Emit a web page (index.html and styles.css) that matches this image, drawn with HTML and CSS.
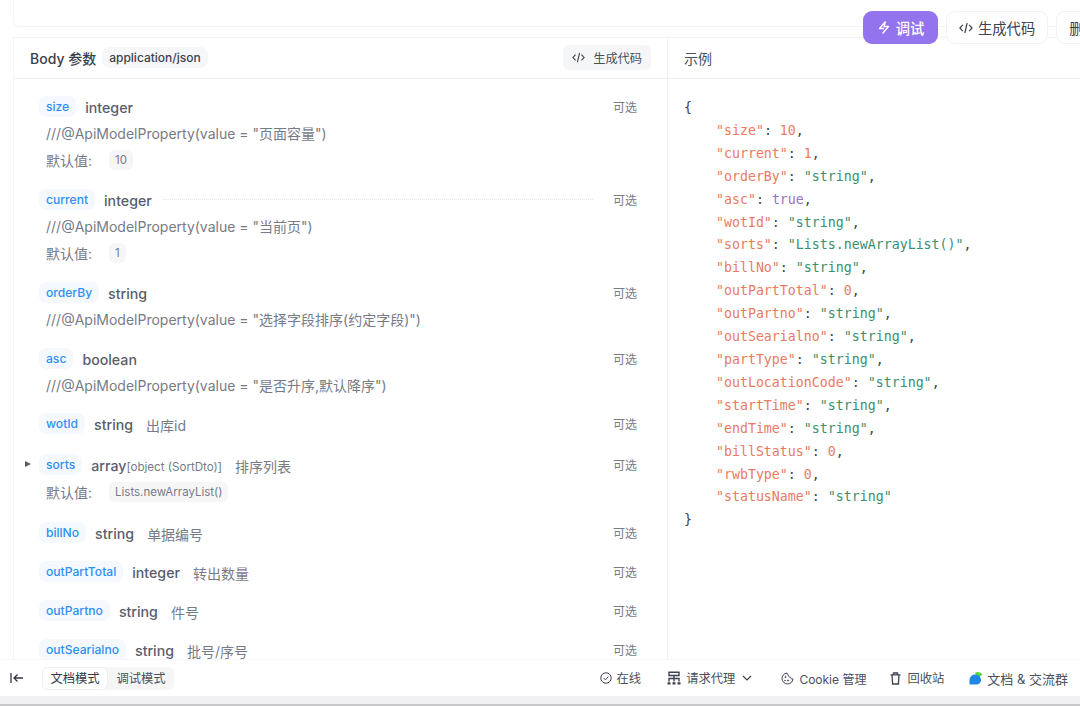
FILE: index.html
```html
<!DOCTYPE html>
<html lang="en">
<head>
    <meta charset="UTF-8">
    <meta name="viewport" content="width=device-width, initial-scale=1.0">
    <title>Body 参数</title>
    <link rel="stylesheet" href="styles.css">
</head>
<body>
    <div class="top-card"></div>

    <div class="top-actions">
        <button class="btn btn-run">
            <svg width="14" height="15" viewBox="0 0 14 15" fill="none" stroke="#fff" stroke-width="1.3" stroke-linejoin="round"><path d="M8.500 1.500 2.500 8.500h4.500M5.500 13.500l6-7H7L8.500 1.500"/></svg>
            调试
        </button>
        <button class="btn">
            <svg width="14" height="12" viewBox="0 0 14 12" fill="none" stroke="#3d4250" stroke-width="1.2"><path d="M3.800 2.800.9 6l2.900 3.200M10.200 2.800 13.100 6l-2.900 3.200M8.200 1 5.800 11"/></svg>
            生成代码
        </button>
        <button class="btn">删除</button>
    </div>

    <main class="panel">
        <section class="col-left">
            <header class="col-head">
                <div class="head-left">
                    <span class="head-title">Body 参数</span>
                    <span class="content-type">application/json</span>
                </div>
                <button class="gen-code">
                    <svg width="13" height="11" viewBox="0 0 14 12" fill="none" stroke="#3d4250" stroke-width="1.2"><path d="M3.800 2.800.9 6l2.900 3.200M10.200 2.800 13.100 6l-2.900 3.200M8.200 1 5.800 11"/></svg>
                    生成代码
                </button>
            </header>

            <div class="params">
                <div class="param">
                    <div class="param-line">
                        <span class="name">size</span><span class="type">integer</span>
                        <span class="optional">可选</span>
                    </div>
                    <div class="desc">///@ApiModelProperty(value = "页面容量")</div>
                    <div class="desc">默认值: <span class="default-val">10</span></div>
                </div>
                <div class="param">
                    <div class="param-line">
                        <span class="name">current</span><span class="type">integer</span>
                        <span class="dots"></span>
                        <span class="optional">可选</span>
                    </div>
                    <div class="desc">///@ApiModelProperty(value = "当前页")</div>
                    <div class="desc">默认值: <span class="default-val">1</span></div>
                </div>
                <div class="param">
                    <div class="param-line">
                        <span class="name">orderBy</span><span class="type">string</span>
                        <span class="optional">可选</span>
                    </div>
                    <div class="desc">///@ApiModelProperty(value = "选择字段排序(约定字段)")</div>
                </div>
                <div class="param param-asc">
                    <div class="param-line">
                        <span class="name">asc</span><span class="type">boolean</span>
                        <span class="optional">可选</span>
                    </div>
                    <div class="desc">///@ApiModelProperty(value = "是否升序,默认降序")</div>
                </div>
                <div class="param param-wotid">
                    <div class="param-line">
                        <span class="name">wotId</span><span class="type">string</span><span class="note">出库id</span>
                        <span class="optional">可选</span>
                    </div>
                </div>
                <div class="param param-sorts">
                    <div class="param-line">
                        <span class="caret"></span>
                        <span class="name">sorts</span><span class="type">array<em>[object (SortDto)]</em></span><span class="note">排序列表</span>
                        <span class="optional">可选</span>
                    </div>
                    <div class="desc">默认值: <span class="default-val">Lists.newArrayList()</span></div>
                </div>
                <div class="param">
                    <div class="param-line">
                        <span class="name">billNo</span><span class="type">string</span><span class="note">单据编号</span>
                        <span class="optional">可选</span>
                    </div>
                </div>
                <div class="param">
                    <div class="param-line">
                        <span class="name">outPartTotal</span><span class="type">integer</span><span class="note">转出数量</span>
                        <span class="optional">可选</span>
                    </div>
                </div>
                <div class="param">
                    <div class="param-line">
                        <span class="name">outPartno</span><span class="type">string</span><span class="note">件号</span>
                        <span class="optional">可选</span>
                    </div>
                </div>
                <div class="param">
                    <div class="param-line">
                        <span class="name">outSearialno</span><span class="type">string</span><span class="note">批号/序号</span>
                        <span class="optional">可选</span>
                    </div>
                </div>
            </div>
        </section>

        <section class="col-right">
            <header class="col-head col-head-right">示例</header>
<pre class="code">{
    <b>"size"</b>: <i>10</i>,
    <b>"current"</b>: <i>1</i>,
    <b>"orderBy"</b>: <u>"string"</u>,
    <b>"asc"</b>: <s>true</s>,
    <b>"wotId"</b>: <u>"string"</u>,
    <b>"sorts"</b>: <u>"Lists.newArrayList()"</u>,
    <b>"billNo"</b>: <u>"string"</u>,
    <b>"outPartTotal"</b>: <i>0</i>,
    <b>"outPartno"</b>: <u>"string"</u>,
    <b>"outSearialno"</b>: <u>"string"</u>,
    <b>"partType"</b>: <u>"string"</u>,
    <b>"outLocationCode"</b>: <u>"string"</u>,
    <b>"startTime"</b>: <u>"string"</u>,
    <b>"endTime"</b>: <u>"string"</u>,
    <b>"billStatus"</b>: <i>0</i>,
    <b>"rwbType"</b>: <i>0</i>,
    <b>"statusName"</b>: <u>"string"</u>
}</pre>
        </section>
    </main>

    <footer class="bottom-bar">
        <div class="bottom-left">
            <svg class="collapse" width="14" height="12" viewBox="0 0 14 12" fill="none" stroke="#33384a" stroke-width="1.3"><path d="M1 1v10M13 6H4M7.500 2.500 4 6l3.500 3.500"/></svg>
            <div class="mode-switch">
                <span class="mode mode-active">文档模式</span>
                <span class="mode">调试模式</span>
            </div>
        </div>
        <div class="bottom-right">
            <span class="tool">
                <svg width="12" height="12" viewBox="0 0 12 12" fill="none" stroke="#3d4250" stroke-width="1"><circle cx="6" cy="6" r="5.200"/><path d="m3.600 6 1.800 1.800 3-3.200"/></svg>
                在线
            </span>
            <span class="tool tool-proxy">
                <svg width="14" height="14" viewBox="0 0 14 14" fill="none" stroke="#3d4250" stroke-width="1.400"><path d="M2 1.200h10v3.300H2zM7 4.500v6M2 10.500V7.500h10v3"/><path d="M.5 12.300h3M5.500 12.300h3M10.500 12.300h3" stroke-width="2.200"/></svg>
                请求代理
                <svg class="chev" width="10" height="6" viewBox="0 0 10 6" fill="none" stroke="#3d4250" stroke-width="1.200"><path d="m1 1 4 4 4-4"/></svg>
            </span>
            <span class="tool tool-cookie">
                <svg width="13" height="13" viewBox="0 0 13 13" fill="none" stroke="#3d4250" stroke-width="1"><path d="M6 1a5.500 5.500 0 1 0 6 6c-1.500.3-2.500-.7-2.500-1.800C8 5.200 7 4 7.300 2.800 6.500 2.700 6 2 6 1z"/><circle cx="4.500" cy="5" r=".6"/><circle cx="7" cy="8.500" r=".6"/><circle cx="4" cy="8.500" r=".4"/></svg>
                Cookie 管理
            </span>
            <span class="tool tool-trash">
                <svg width="11" height="13" viewBox="0 0 11 13" fill="none" stroke="#3d4250" stroke-width="1.300"><path d="M.5 2.800h10M3.500 2.500V1h4v1.500M2 3l.6 9h5.800L9 3"/></svg>
                回收站
            </span>
            <span class="tool tool-group">
                <svg width="14" height="14" viewBox="0 0 14 14"><path d="M6 1.800a6 6 0 0 1 7.500 1.700L9 7z" fill="#5fd13a"/><path d="M6.500 3.500a6 5.500 0 0 1 5.500 5.500c0 2.500-2 4.500-5 4.500H.5V9a5.500 5.500 0 0 1 6-5.500z" fill="#1e88e8"/></svg>
                文档 &amp; 交流群
            </span>
        </div>
    </footer>
    <div class="bottom-strip"></div>
</body>
</html>
```

FILE: styles.css
```css
* {
    box-sizing: border-box;
}
html, body {
    height: 100%;
}
body {
    margin: 0;
    display: flex;
    flex-direction: column;
    height: 706px;
    overflow: hidden;
    background-color: #fff;
    color: #3d4250;
    font-family: Inter, "Noto Sans CJK SC", sans-serif;
    font-size: 14px;
}
button {
    font-family: inherit;
}

.top-card {
    height: 27px;
    margin-bottom: 10px;
    margin-left: 13px;
    flex: none;
    border-left: 1px solid #f6f6f7;
    border-bottom: 1px solid #f3f3f5;
    border-bottom-left-radius: 6px;
}

/* floats over the panel header */
.top-actions {
    position: absolute;
    top: 11px;
    left: 863px;
    display: flex;
    gap: 8px;
    width: 260px;
}
.btn {
    display: flex;
    align-items: center;
    justify-content: center;
    gap: 5px;
    flex: none;
    height: 33px;
    padding: 0 12px;
    border: 1px solid #f2f2f4;
    border-radius: 9px;
    background-color: #fff;
    color: #3d4250;
    font-size: 14.300px;
}
.btn-run {
    width: 75px;
    padding: 0;
    border: none;
    background-color: #9373ee;
    color: #fff;
    font-weight: 500;
}

.panel {
    flex: 1;
    min-height: 0;
    display: flex;
    margin-left: 13px;
    border-top: 1px solid #f3f3f5;
    border-left: 1px solid #f6f6f7;
}
.col-left {
    width: 654px;
    flex: none;
    display: flex;
    flex-direction: column;
    border-right: 1px solid #f0f0f2;
}
.col-right {
    flex: 1;
    min-width: 0;
}
.col-head {
    display: flex;
    align-items: center;
    justify-content: space-between;
    height: 41px;
    padding: 0 16px 1px;
    border-bottom: 1px solid #f0f0f2;
}
.col-head-right {
    font-size: 14px;
    color: #4a4f5c;
}
.head-left {
    display: flex;
    align-items: center;
    gap: 5px;
}
.head-title {
    font-size: 14px;
    font-weight: 500;
    color: #3a3f4c;
}
.content-type {
    padding: 3px 7px;
    border-radius: 8px;
    background-color: #f6f7f9;
    font-size: 12px;
    font-weight: 500;
    color: #3d4250;
    margin-left: 1px;
}
.gen-code {
    display: flex;
    align-items: center;
    gap: 8px;
    height: 25px;
    padding: 0 9px;
    border: none;
    border-radius: 6px;
    background-color: #f5f6f8;
    color: #4a4f5c;
    font-size: 12.200px;
}

.params {
    flex: 1;
    min-height: 0;
    overflow: hidden;
    padding: 15px 30px 0 25px;
}
.param {
    padding-bottom: 14px;
}
.param-asc {
    padding-bottom: 13px;
}
.param-wotid {
    padding-bottom: 16px;
}
.param-sorts {
    padding-bottom: 15px;
}
.param-sorts .desc {
    margin-top: 1px;
}
.param-line {
    position: relative;
    display: flex;
    align-items: center;
    height: 25px;
}
.name {
    margin-right: 9px;
    padding: 3px 7px;
    border-radius: 7px;
    background-color: #f5f9fe;
    color: #2e90f5;
    font-size: 12.100px;
    font-weight: 500;
}
.type {
    margin-top: 2px;
    font-size: 14.200px;
    font-weight: 500;
    color: #5a5e6b;
}
.type em {
    font-style: normal;
    font-weight: 400;
    font-size: 11.600px;
    color: #777b87;
}
.note {
    margin-top: 2px;
    margin-left: 13px;
    color: #777b87;
}
.dots {
    flex: 1;
    margin: 0 20px 0 11px;
    border-top: 1px dotted #e8e8ea;
}
.optional {
    margin-left: auto;
    font-size: 12px;
    color: #777b87;
}
.dots + .optional {
    margin-left: 0;
}
.desc {
    display: flex;
    align-items: center;
    height: 27px;
    padding-left: 7px;
    color: #777b87;
    font-size: 14px;
}
.default-val {
    margin-left: 17px;
    padding: 3px 6px;
    border-radius: 6px;
    background-color: #f6f6f7;
    font-size: 11.500px;
}
.caret {
    position: absolute;
    left: -14px;
    top: 9px;
    border-left: 6px solid #5a5e6b;
    border-top: 3.500px solid transparent;
    border-bottom: 3.500px solid transparent;
}

.code {
    margin: 0;
    padding: 18px 16px 0;
    font-family: "DejaVu Sans Mono", monospace;
    font-size: 13.280px;
    line-height: 22.900px;
    color: #3d4250;
}
.code b {
    font-weight: 400;
    color: #ea7b5f;
}
.code i {
    font-style: normal;
    color: #ea7b5f;
}
.code u {
    text-decoration: none;
    color: #3b8f6e;
}
.code s {
    text-decoration: none;
    color: #9a6fc8;
}

.bottom-bar {
    display: flex;
    align-items: center;
    justify-content: space-between;
    flex: none;
    height: 37px;
    padding: 0 12px 0 10px;
    background-color: #fff;
    border-top: 1px solid #f6f6f7;
}
.bottom-left {
    display: flex;
    align-items: center;
    gap: 18px;
}
.mode-switch {
    display: flex;
    align-items: center;
    height: 23px;
    width: 132px;
    border-radius: 6px;
    background-color: #f6f6f7;
}
.mode {
    flex: 1;
    text-align: center;
    font-size: 12.300px;
    line-height: 23px;
    color: #4a4f5c;
}
.mode-active {
    flex: none;
    width: 66px;
    background-color: #fff;
    border: 1px solid #efeff1;
    border-radius: 6px;
    line-height: 21px;
    color: #33384a;
}
.bottom-right {
    display: flex;
    align-items: center;
    gap: 26px;
    font-size: 12.300px;
    color: #4a4f5c;
}
.tool {
    display: flex;
    align-items: center;
    gap: 5px;
}
.chev {
    margin-left: 2px;
}
.tool-cookie {
    margin-left: 3px;
    font-size: 12px;
}
.tool-trash {
    gap: 6px;
    margin-left: -2px;
}
.tool-group {
    gap: 4px;
    margin-left: -1px;
    font-size: 13px;
}
.bottom-strip {
    height: 10px;
    flex: none;
    background-color: #f1f1f3;
    border-bottom: 2px solid #c8c8ca;
}
```
